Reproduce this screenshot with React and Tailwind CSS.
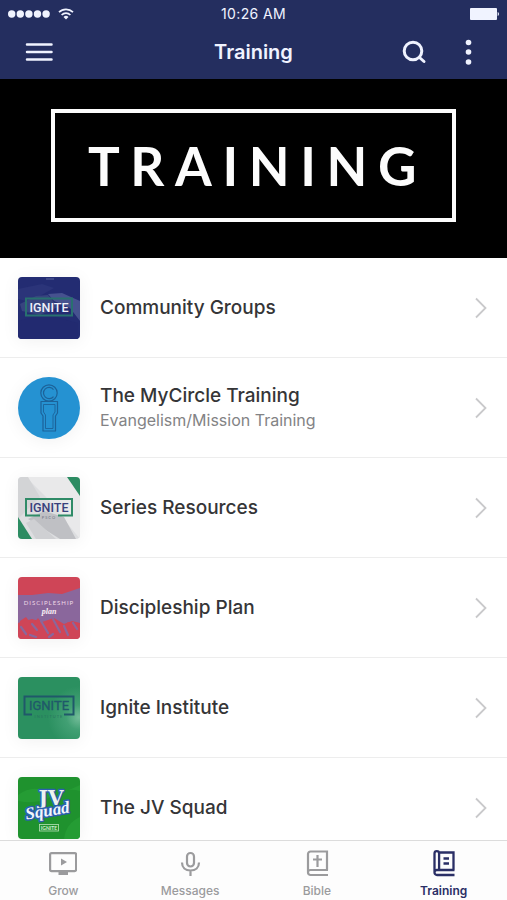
import React, { useState } from 'react';

// Thumbnails
function CommunityThumb() {
  return (
    <svg viewBox="0 0 62 62" className="h-full w-full" aria-hidden="true">
      <rect width="62" height="62" fill="#232c72" />
      <path d="M0 12 L24 7 L36 11 L20 20 L8 24 L0 22Z" fill="#2b3479" />
      <path d="M30 17 L44 16 L62 24 V44 L52 31 L36 24Z" fill="#46528f" />
      <path d="M2 27 L18 19 L30 18 L40 30 L22 38 L4 34Z" fill="#37447f" />
      <path d="M0 44 L26 37 L60 46 V62 H0Z" fill="#222a70" />
      <path d="M28 2 H36" stroke="#5a659c" strokeWidth="1" />
      <rect x="8" y="21.500" width="46" height="17" fill="none" stroke="#28706f" strokeWidth="2" />
      <text x="31" y="34.500" textAnchor="middle" fontFamily="Roboto, sans-serif" fontSize="12.500" fontWeight="500" fill="#eef0fa">IGNITE</text>
    </svg>
  );
}

function CircleThumb() {
  return (
    <svg viewBox="0 0 62 62" className="h-full w-full" aria-hidden="true">
      <rect width="62" height="62" fill="#2592d2" />
      <g fill="none" stroke="#1c6299" strokeWidth="1.200" strokeLinejoin="round">
        <circle cx="31" cy="16" r="8.200" />
        <path d="M35.500 12.500 A5.600 5.600 0 1 0 35.500 19.500" />
        <path d="M23 24.500 H39.500 V36 L37.500 39 V54 H25 V39 L23 36Z" />
        <path d="M25.500 27.500 H37 V35 L35 38 V51.500 H27.500 V38 L25.500 35Z" strokeWidth="0.900" />
      </g>
    </svg>
  );
}

function SeriesThumb() {
  return (
    <svg viewBox="0 0 62 62" className="h-full w-full" aria-hidden="true">
      <rect width="62" height="62" fill="#dddee0" />
      <path d="M8 0 H52 L62 20 V62 L28 20Z" fill="#e9e9ea" />
      <path d="M0 0 H10 L22 20 L0 42Z" fill="#d3d4d6" />
      <path d="M10 42 L26 34 L46 40 L58 62 H42Z" fill="#bfc0c4" />
      <path d="M8 46 L16 42 L38 62 H18Z" fill="#cfd0d3" />
      <path d="M49 0 H62 V19Z" fill="#2c8c62" />
      <path d="M0 40 L14 62 H0Z" fill="#2c8c62" />
      <path d="M22 38.500 H8 V22 H54 V38.500 H40" fill="none" stroke="#2f8b67" strokeWidth="2" />
      <text x="31" y="34.500" textAnchor="middle" fontFamily="Roboto, sans-serif" fontSize="12.500" fontWeight="500" fill="#39417c">IGNITE</text>
      <text x="31" y="41.500" textAnchor="middle" fontFamily="Lato, sans-serif" fontSize="4" letterSpacing="1" fill="#6f7484">PSCO</text>
    </svg>
  );
}

function DiscipleshipThumb() {
  return (
    <svg viewBox="0 0 62 62" className="h-full w-full" aria-hidden="true">
      <rect width="62" height="62" fill="#cf4557" />
      <path d="M0 18 L14 18 L30 16 L44 17 L62 11 V46 L54 44 L46 47 L36 41 L24 45 L14 42 L0 46Z" fill="#8a679c" />
      <path d="M2 44 L8 40 L14 48 L20 41 L27 50 L34 42 L42 52 L50 45 L58 50 L62 56 V62 H0Z" fill="#cf4557" />
      <g fill="none" stroke="#8a679c" strokeWidth="2.200" strokeLinecap="round">
        <path d="M3 50 L8 57 M14 47 L19 53 M23 44 L30 56 M35 42 L42 55 M46 49 L50 58 M55 46 L59 52 M12 58 L18 60 M31 60 L35 57" />
      </g>
      <text x="31" y="28" textAnchor="middle" fontFamily="Lato, sans-serif" fontSize="6" letterSpacing="1" fill="#eed9e6">DISCIPLESHIP</text>
      <text x="31" y="37" textAnchor="middle" fontFamily="Liberation Serif, serif" fontSize="8" fontStyle="italic" fontWeight="700" fill="#faf0f5">plan</text>
    </svg>
  );
}

function InstituteThumb() {
  return (
    <svg viewBox="0 0 62 62" className="h-full w-full" aria-hidden="true">
      <defs>
        <radialGradient id="instituteGlow" cx="0.98" cy="0.65" r="0.5">
          <stop offset="0" stopColor="#74bd9a" />
          <stop offset="0.4" stopColor="#42a074" />
          <stop offset="1" stopColor="#2b9060" />
        </radialGradient>
      </defs>
      <rect width="62" height="62" fill="url(#instituteGlow)" />
      <path d="M14 37.500 H6.500 V19.500 H55.500 V37.500 H46" fill="none" stroke="#20586a" strokeWidth="2" />
      <text x="31" y="33" textAnchor="middle" fontFamily="Roboto, sans-serif" fontSize="13" fill="#20586a" stroke="#20586a" strokeWidth="0.300">IGNITE</text>
      <text x="31" y="41" textAnchor="middle" fontFamily="Lato, sans-serif" fontSize="4" letterSpacing="1" fill="#27735f">INSTITUTE</text>
    </svg>
  );
}

function SquadThumb() {
  return (
    <svg viewBox="0 0 62 62" className="h-full w-full" aria-hidden="true">
      <rect width="62" height="62" fill="#1f922e" />
      <path d="M0 18 Q14 8 26 14 T62 8 V14 Q48 10 34 19 T0 24Z" fill="#259c34" />
      <path d="M46 62 Q48 46 62 40 V62Z" fill="#259c34" />
      <g textAnchor="middle" strokeLinejoin="round" paintOrder="stroke">
        <text x="33" y="28" fontFamily="DejaVu Serif, serif" fontSize="20" fontWeight="700" fill="#eef3ee" stroke="#2a5fae" strokeWidth="2.500">JV</text>
        <text x="30" y="39" transform="rotate(-9 30 37)" fontFamily="Liberation Serif, serif" fontSize="17" fontStyle="italic" fontWeight="700" fill="#f2f6fb" stroke="#2a5fae" strokeWidth="3">Squad</text>
      </g>
      <rect x="21.500" y="47.500" width="19" height="6.500" fill="none" stroke="#b9e2b8" strokeWidth="0.800" />
      <text x="31" y="52.700" textAnchor="middle" fontFamily="Lato, sans-serif" fontSize="5" fontWeight="700" fill="#d5efd4">IGNITE</text>
    </svg>
  );
}

// Tab icons
function GrowIcon() {
  return (
    <svg viewBox="0 0 28 28" className="h-7 w-7" fill="none" stroke="currentColor" strokeWidth="2.200" aria-hidden="true">
      <rect x="1.100" y="4.100" width="26" height="18" rx="1.500" />
      <path d="M9.500 24.500 H19" strokeWidth="3" />
      <path d="M12 9.500 L18 13 L12 16.500Z" fill="currentColor" stroke="none" />
    </svg>
  );
}

function MessagesIcon() {
  return (
    <svg viewBox="0 0 28 28" className="h-7 w-7" fill="none" stroke="currentColor" strokeWidth="2.200" aria-hidden="true">
      <rect x="11" y="4" width="7" height="13.500" rx="3.500" />
      <path d="M6 13.500 C6 18.500 9.500 21.500 14.500 21.500 S23 18.500 23 13.500 M14.500 21.500 V27" />
    </svg>
  );
}

function BibleIcon() {
  return (
    <svg viewBox="0 0 28 28" className="h-7 w-7" fill="none" stroke="currentColor" strokeWidth="2.200" aria-hidden="true">
      <path d="M25 21 H7.500 A2.500 2.500 0 0 0 7.500 26 H25 M5 23.500 V5 A2.500 2.500 0 0 1 7.500 2.500 H24 V21" />
      <path d="M14.500 6 V18 M10 10.500 H19" />
    </svg>
  );
}

function TrainingIcon() {
  return (
    <svg viewBox="0 0 28 28" className="h-7 w-7" fill="none" stroke="currentColor" strokeWidth="2.300" aria-hidden="true">
      <path d="M24.500 21 H7 A2.500 2.500 0 0 0 7 26 H24.500 M4.500 23.500 V4.500 A2.300 2.300 0 0 1 9.100 4.500 V21 M9.100 3.500 H23.500 V21" />
      <path d="M13.500 9.500 H19 M13.500 14.500 H19" />
    </svg>
  );
}

const items = [
  { id: 1, title: 'Community Groups', thumb: CommunityThumb },
  { id: 2, title: 'The MyCircle Training', subtitle: 'Evangelism/Mission Training', thumb: CircleThumb, round: true },
  { id: 3, title: 'Series Resources', thumb: SeriesThumb },
  { id: 4, title: 'Discipleship Plan', thumb: DiscipleshipThumb },
  { id: 5, title: 'Ignite Institute', thumb: InstituteThumb },
  { id: 6, title: 'The JV Squad', thumb: SquadThumb },
];

const tabs = [
  { name: 'Grow', icon: GrowIcon },
  { name: 'Messages', icon: MessagesIcon },
  { name: 'Bible', icon: BibleIcon },
  { name: 'Training', icon: TrainingIcon },
];

function StatusBar() {
  return (
    <div className="grid h-7 grid-cols-3 items-center px-2">
      <div className="flex items-center gap-2">
        <svg viewBox="0 0 42 8" className="h-2 w-[42px]" fill="currentColor" aria-hidden="true">
          <circle cx="3.700" cy="4" r="3.700" />
          <circle cx="12.300" cy="4" r="3.700" />
          <circle cx="20.900" cy="4" r="3.700" />
          <circle cx="29.500" cy="4" r="3.700" />
          <circle cx="38.100" cy="4" r="3.700" />
        </svg>
        <svg viewBox="0 0 16 12" className="h-3 w-4" fill="none" stroke="currentColor" strokeWidth="1.700" aria-hidden="true">
          <path d="M1 4.200 A10 10 0 0 1 15 4.200" />
          <path d="M3.600 7 A6.300 6.300 0 0 1 12.400 7" />
          <path d="M8 11.500 L5.500 9 A3.500 3.500 0 0 1 10.500 9Z" fill="currentColor" stroke="none" />
        </svg>
      </div>
      <span className="text-center text-sm tracking-wide">10:26 AM</span>
      <svg viewBox="0 0 30 12" className="h-3 w-[30px] justify-self-end" fill="currentColor" aria-hidden="true">
        <rect x="1" width="27" height="12" rx="1" />
        <path d="M28.700 4 Q30 4.500 30 6 T28.700 8Z" />
      </svg>
    </div>
  );
}

function App() {
  const [activeTab, setActiveTab] = useState('Training');

  return (
    <div className="flex h-screen flex-col bg-white font-['Inter',sans-serif] text-[#353537]">
      <header className="shrink-0 bg-[#242e5f] text-[#f0f3ff]">
        <StatusBar />
        <div className="grid h-[51px] grid-cols-3 items-start px-6">
          <button aria-label="Menu" className="h-12 w-8">
            <svg viewBox="0 0 32 48" className="h-12 w-8" fill="none" stroke="currentColor" strokeWidth="2.500" strokeLinecap="round">
              <path d="M3 16.500 H27.500 M3 24 H27.500 M3 31.500 H27.500" />
            </svg>
          </button>
          <h1 className="text-center text-xl leading-[48px] font-semibold">Training</h1>
          <div className="flex justify-end gap-6">
            <button aria-label="Search" className="h-12 w-8">
              <svg viewBox="0 0 32 48" className="h-12 w-8" fill="none" stroke="currentColor" strokeWidth="3" strokeLinecap="round">
                <circle cx="18" cy="23" r="8.800" />
                <path d="M24.500 29.500 L29 33.500" />
              </svg>
            </button>
            <button aria-label="More" className="h-12 w-8">
              <svg viewBox="0 0 32 48" className="h-12 w-8" fill="currentColor">
                <circle cx="17.500" cy="14.500" r="2.800" />
                <circle cx="17.500" cy="24" r="2.800" />
                <circle cx="17.500" cy="34" r="2.800" />
              </svg>
            </button>
          </div>
        </div>
      </header>

      <main className="min-h-0 flex-1 overflow-y-auto [scrollbar-width:none]">
        {/* Banner */}
        <section className="bg-black px-[51px] pt-[30px] pb-9 text-[#fcfcfc]">
          <div className="flex h-[113px] items-center justify-center border-4 border-current">
            <h2 className="pl-2 text-center font-['Lato',sans-serif] text-[53px] leading-none font-bold tracking-[0.2em]">TRAINING</h2>
          </div>
        </section>

        {/* Training list */}
        <ul>
          {items.map((item) => (
            <li key={item.id} className="border-b border-[#ededed]">
              <a href="#" className="flex h-[99px] items-center pr-5 pl-[18px]">
                <div className={`h-[62px] w-[62px] shrink-0 overflow-hidden shadow-[0_2px_18px_rgba(0,0,0,0.06)] ${item.round ? 'rounded-full' : 'rounded'}`}>
                  <item.thumb />
                </div>
                <div className="ml-5 flex-1">
                  <h3 className="text-[19px] leading-6 font-medium">{item.title}</h3>
                  {item.subtitle && <p className="text-base leading-6 text-[#838385]">{item.subtitle}</p>}
                </div>
                <svg viewBox="0 0 12 22" className="h-[22px] w-3 shrink-0" fill="none" stroke="#c9c9cb" strokeWidth="1.800" aria-hidden="true">
                  <path d="M1 1.500 L10.500 11 L1 20.500" />
                </svg>
              </a>
            </li>
          ))}
        </ul>
      </main>

      {/* Bottom tabs */}
      <nav className="grid h-[60px] shrink-0 grid-cols-4 border-t border-[#dcdcdc] bg-[#fdfdfd]">
        {tabs.map((tab) => (
          <button
            key={tab.name}
            onClick={() => setActiveTab(tab.name)}
            className={`flex flex-col items-center gap-1 pt-2 ${activeTab === tab.name ? 'font-semibold text-[#2a2f66]' : 'font-medium text-[#9b9b9d]'}`}
          >
            <tab.icon />
            <span className="text-xs leading-5">{tab.name}</span>
          </button>
        ))}
      </nav>
    </div>
  );
}

export default App;
